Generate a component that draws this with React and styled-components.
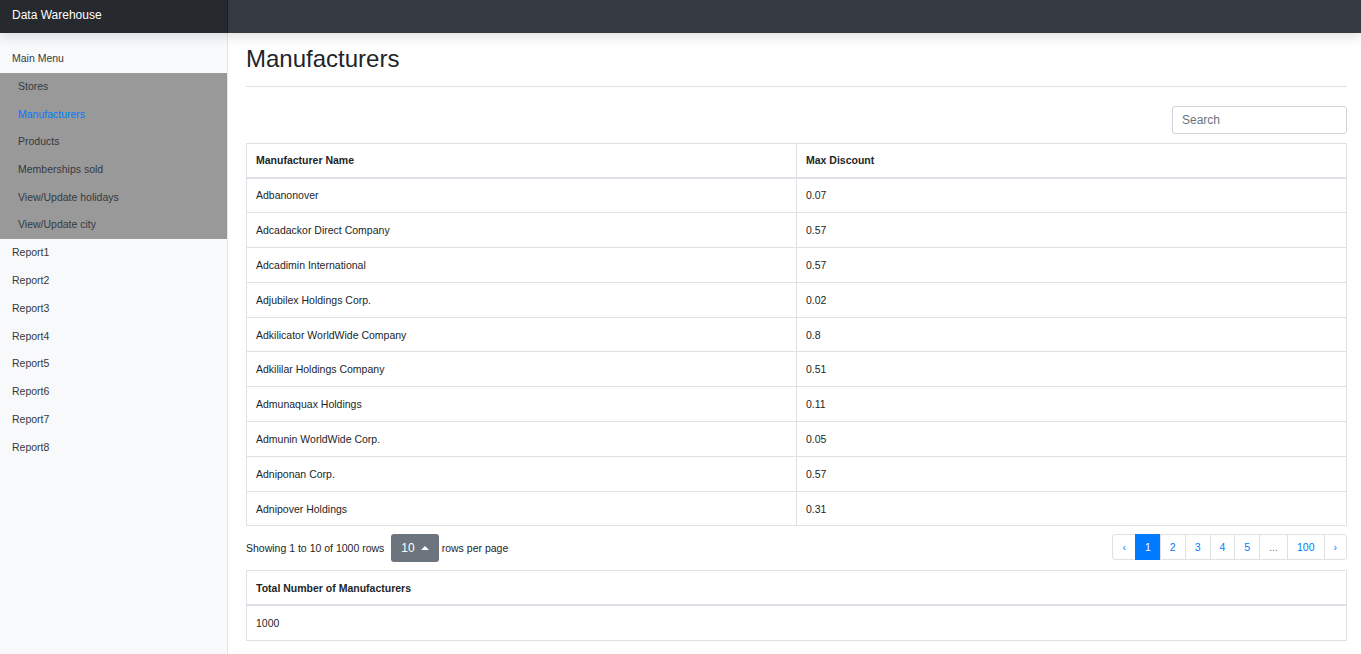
import React from "react";
import styled, { createGlobalStyle } from "styled-components";

const GlobalStyle = createGlobalStyle`
  html, body {
    margin: 0;
    padding: 0;
    height: 100%;
  }
  body {
    font-family: "Liberation Sans", Arial, sans-serif;
    color: #212529;
    background: #fff;
    overflow: hidden;
  }
`;

const rows = [
  ["Adbanonover", "0.07"],
  ["Adcadackor Direct Company", "0.57"],
  ["Adcadimin International", "0.57"],
  ["Adjubilex Holdings Corp.", "0.02"],
  ["Adkilicator WorldWide Company", "0.8"],
  ["Adkililar Holdings Company", "0.51"],
  ["Admunaquax Holdings", "0.11"],
  ["Admunin WorldWide Corp.", "0.05"],
  ["Adniponan Corp.", "0.57"],
  ["Adnipover Holdings", "0.31"],
];

const subItems = [
  "Stores",
  "Manufacturers",
  "Products",
  "Memberships sold",
  "View/Update holidays",
  "View/Update city",
];

const reports = ["Report1", "Report2", "Report3", "Report4", "Report5", "Report6", "Report7", "Report8"];

const pages = ["‹", "1", "2", "3", "4", "5", "...", "100", "›"];

const App = () => {
  return (
    <>
      <GlobalStyle />
      <Navbar>
        <Brand>Data Warehouse</Brand>
      </Navbar>
      <Layout>
        <Sidebar>
          <MenuHeading>Main Menu</MenuHeading>
          <SubMenu>
            {subItems.map((s) => (
              <SubItem key={s} active={s === "Manufacturers"}>
                {s}
              </SubItem>
            ))}
          </SubMenu>
          {reports.map((r) => (
            <MenuItem key={r}>{r}</MenuItem>
          ))}
        </Sidebar>
        <Main>
          <Title>Manufacturers</Title>
          <Divider />
          <Toolbar>
            <SearchInput placeholder="Search" />
          </Toolbar>
          <Table>
            <thead>
              <tr>
                <Th>Manufacturer Name</Th>
                <Th>Max Discount</Th>
              </tr>
            </thead>
            <tbody>
              {rows.map(([name, disc]) => (
                <tr key={name}>
                  <Td>{name}</Td>
                  <Td>{disc}</Td>
                </tr>
              ))}
            </tbody>
          </Table>
          <FooterRow>
            <PageInfo>
              Showing 1 to 10 of 1000 rows
              <SizeButton>
                10 <Caret />
              </SizeButton>
              rows per page
            </PageInfo>
            <Pagination>
              {pages.map((p) => (
                <PageLink key={p} active={p === "1"} muted={p === "..."}>
                  {p}
                </PageLink>
              ))}
            </Pagination>
          </FooterRow>
          <Table>
            <thead>
              <tr>
                <Th>Total Number of Manufacturers</Th>
              </tr>
            </thead>
            <tbody>
              <tr>
                <Td>1000</Td>
              </tr>
            </tbody>
          </Table>
        </Main>
      </Layout>
    </>
  );
};

const Navbar = styled.nav`
  position: relative;
  z-index: 2;
  display: flex;
  height: 33px;
  background: #343a40;
  box-shadow: 0 4px 12px rgba(0, 0, 0, 0.12);
`;

const Brand = styled.div`
  width: 216px;
  padding-left: 12px;
  background: #26292d;
  box-shadow: inset -1px 0 0 rgba(0, 0, 0, 0.25);
  color: #fff;
  font-size: 12px;
  line-height: 31px;
`;

const Layout = styled.div`
  display: grid;
  grid-template-columns: 228px 1fr;
  height: calc(100vh - 33px);
`;

const Sidebar = styled.aside`
  background: #f8f9fa;
  border-right: 1px solid #e3e6ea;
  padding-top: 11px;
  font-size: 10.5px;
`;

const MenuHeading = styled.div`
  padding: 0 12px;
  height: 29px;
  line-height: 28px;
  color: #343a40;
`;

const SubMenu = styled.div`
  background: #999999;
`;

const SubItem = styled.div`
  padding: 0 18px;
  height: 27.7px;
  line-height: 27.7px;
  color: ${(p) => (p.active ? "#007bff" : "#343a40")};
`;

const MenuItem = styled.div`
  padding: 0 12px;
  height: 27.8px;
  line-height: 26.8px;
  color: #343a40;
`;

const Main = styled.main`
  padding: 10px 14px 0 18px;
  font-size: 10.5px;
`;

const Title = styled.h1`
  margin: 0;
  font-size: 24px;
  font-weight: 400;
  line-height: 32px;
  color: #212529;
`;

const Divider = styled.hr`
  margin: 11px 0 19px;
  border: 0;
  border-top: 1px solid #dfe1e4;
`;

const Toolbar = styled.div`
  display: flex;
  justify-content: flex-end;
  margin-bottom: 9px;
`;

const SearchInput = styled.input`
  box-sizing: border-box;
  width: 175px;
  height: 28px;
  padding: 0 9px;
  border: 1px solid #ced4da;
  border-radius: 3px;
  font-family: inherit;
  font-size: 12px;
  color: #495057;
  &::placeholder {
    color: #6c757d;
  }
`;

const Table = styled.table`
  width: 100%;
  border-collapse: collapse;
  border: 1px solid #dee2e6;
  table-layout: fixed;
`;

const Th = styled.th`
  text-align: left;
  font-weight: 700;
  padding: 0 9px;
  height: 32.5px;
  border: 1px solid #dee2e6;
  border-bottom: 2px solid #dee2e6;
  color: #212529;
`;

const Td = styled.td`
  padding: 0 9px;
  height: 33.8px;
  border: 1px solid #dee2e6;
  color: #212529;
`;

const FooterRow = styled.div`
  display: flex;
  justify-content: space-between;
  align-items: center;
  margin: 8px 0 8px;
`;

const PageInfo = styled.div`
  display: flex;
  align-items: center;
  color: #212529;
`;

const SizeButton = styled.div`
  display: flex;
  align-items: center;
  gap: 6px;
  height: 28px;
  margin: 0 3px 0 7px;
  padding: 0 10px;
  border-radius: 3px;
  background: #6c757d;
  color: #fff;
  font-size: 12px;
`;

const Caret = styled.span`
  width: 0;
  height: 0;
  border-left: 4px solid transparent;
  border-right: 4px solid transparent;
  border-bottom: 4px solid #fff;
  margin-top: -1px;
`;

const Pagination = styled.div`
  display: flex;
  margin-top: -2px;
`;

const PageLink = styled.div`
  box-sizing: border-box;
  height: 26px;
  line-height: 24px;
  padding: 0 9px;
  margin-left: -1px;
  border: 1px solid ${(p) => (p.active ? "#007bff" : "#dee2e6")};
  background: ${(p) => (p.active ? "#007bff" : "#fff")};
  color: ${(p) => (p.active ? "#fff" : p.muted ? "#6c757d" : "#007bff")};
  font-size: 10.5px;
  &:first-child {
    margin-left: 0;
    border-radius: 3px 0 0 3px;
  }
  &:last-child {
    border-radius: 0 3px 3px 0;
  }
`;

export default App;
